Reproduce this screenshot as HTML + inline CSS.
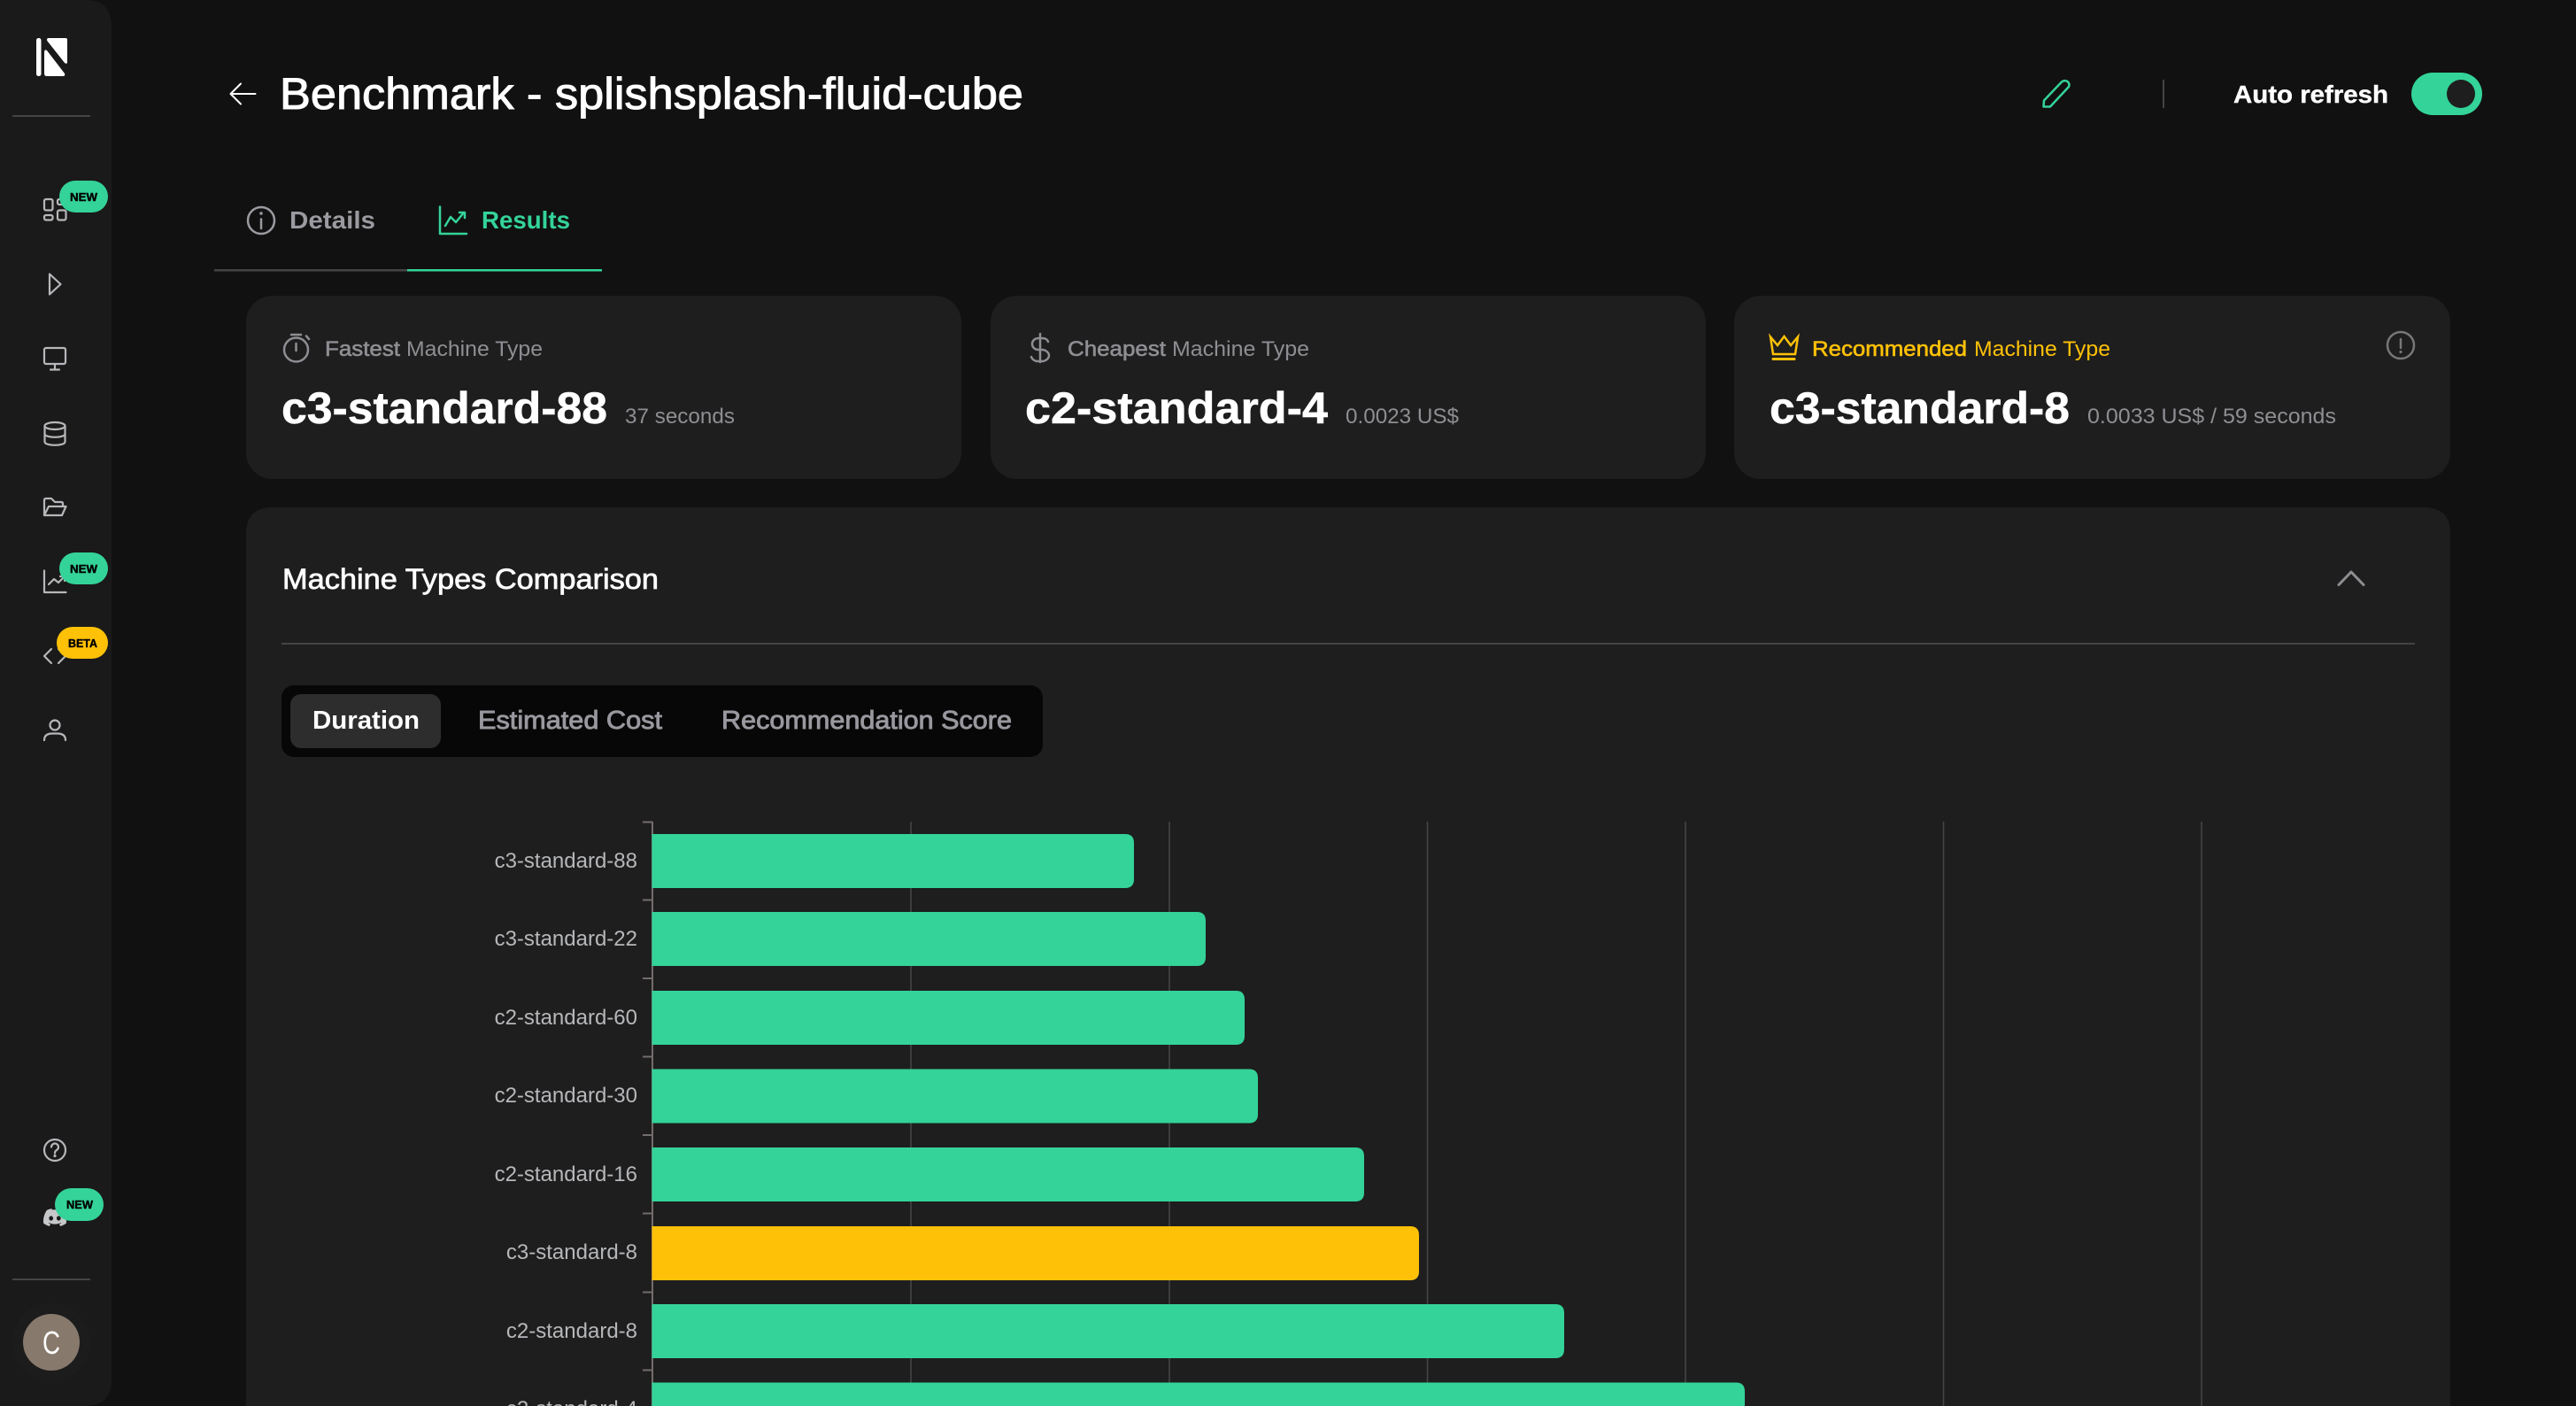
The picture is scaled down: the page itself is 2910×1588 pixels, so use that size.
<!DOCTYPE html>
<html lang="en">
<head>
<meta charset="utf-8">
<title>Benchmark - splishsplash-fluid-cube</title>
<style>
html,body{margin:0;padding:0;background:#111;width:2910px;height:1588px;overflow:hidden}
svg{display:block;overflow:hidden;font-family:"Liberation Sans",Arial,sans-serif}
.ic{fill:none;stroke:#b6b7ba;stroke-width:2.2;stroke-linecap:round;stroke-linejoin:round}
.g{fill:none;stroke:#8e8e93;stroke-width:2.5;stroke-linecap:round;stroke-linejoin:round}
.grn{fill:none;stroke:#34d399;stroke-width:2.5;stroke-linecap:round;stroke-linejoin:round}
.ylw{fill:none;stroke:#ffc107;stroke-width:2.5;stroke-linecap:round;stroke-linejoin:miter}
.bd{font-size:13px;font-weight:700;fill:#000;stroke:#000;stroke-width:.4}
.lb{font-size:24px;fill:#8e8e93}
.med{stroke-width:.6;stroke:#8e8e93}
.val{font-size:50px;font-weight:700;fill:#fff;stroke:#fff;stroke-width:.5}
.sub{font-size:24px;fill:#8e8e93}
.ax{font-size:24px;fill:#b6b7ba;text-anchor:end}
.seg{font-size:29px;fill:#98989e;stroke:#98989e;stroke-width:.9}
</style>
</head>
<body>
<svg width="2910" height="1588" viewBox="0 0 2910 1588" xmlns="http://www.w3.org/2000/svg">
<rect width="2910" height="1588" fill="#111"/>

<!-- sidebar -->
<path d="M0 0 H96 Q126 0 126 30 V1558 Q126 1588 96 1588 H0 Z" fill="#1a1a1a"/>
<rect x="41" y="43" width="5.5" height="43" rx="2.5" fill="#fff"/>
<path d="M53 45 Q53 43 55 43 H74 Q76 43 76 45 V70 Q76 73 73 71 L54 47 Q53 46 53 45 Z" fill="#fff"/>
<path d="M50 60 Q50 55 53 57 L73 83 Q74 86 71 86 H53 Q50 86 50 83 Z" fill="#fff"/>
<rect x="14" y="130" width="88" height="2" fill="#444"/>

<g class="ic">
  <rect x="50" y="225" width="9.5" height="12.5" rx="2"/>
  <rect x="50" y="243" width="9.5" height="5.5" rx="2"/>
  <rect x="65" y="225" width="9.5" height="6" rx="2"/>
  <rect x="65" y="237.5" width="9.5" height="11" rx="2"/>
  <path d="M56 309.5 L68.5 321 L56 332.5 Z"/>
  <rect x="50" y="393" width="24" height="18" rx="2"/>
  <path d="M62 411 V417 M57 417.5 H67"/>
  <ellipse cx="62" cy="481" rx="11.5" ry="4"/>
  <path d="M50.500 481 V499 C50.500 504 73.500 504 73.500 499 V481 M50.500 490 C50.500 495 73.500 495 73.500 490"/>
  <path d="M50 582 V565 Q50 563 52 563 H58 L62 567 H69 Q71 567 71 569 V571 M50 582 L55 572 H74.500 L70 582 Z"/>
  <path d="M50 644.500 V669 H74.500 M55 660 L61 654 L66 658 L73 651 M68 651 H73 V656"/>
  <path d="M58 733 L50 741 L58 749 M66 749 L74 741 L66 733"/>
  <circle cx="62" cy="819" r="5.500"/>
  <path d="M50 836 Q50 829 58 828.500 H66 Q74 829 74 836"/>
  <circle cx="62" cy="1299" r="12"/>
  <path d="M58 1295.500 A4 4 0 1 1 64 1299 C62.500 1300 62 1300.500 62 1302.500"/>
</g>
<circle cx="62" cy="1305.500" r="1.600" fill="#b6b7ba"/>
<path transform="translate(49 1362) scale(1.083)" fill="#c6c7c9" d="M20.317 4.3698a19.7913 19.7913 0 00-4.8851-1.5152.0741.0741 0 00-.0785.0371c-.211.3753-.4447.8648-.6083 1.2495-1.8447-.2762-3.68-.2762-5.4868 0-.1636-.3933-.4058-.8742-.6177-1.2495a.077.077 0 00-.0785-.037 19.7363 19.7363 0 00-4.8852 1.515.0699.0699 0 00-.0321.0277C.5334 9.0458-.319 13.5799.0992 18.0578a.0824.0824 0 00.0312.0561c2.0528 1.5076 4.0413 2.4228 5.9929 3.0294a.0777.0777 0 00.0842-.0276c.4616-.6304.8731-1.2952 1.226-1.9942a.076.076 0 00-.0416-.1057c-.6528-.2476-1.2743-.5495-1.8722-.8923a.077.077 0 01-.0076-.1277c.1258-.0943.2517-.1923.3718-.2914a.0743.0743 0 01.0776-.0105c3.9278 1.7933 8.18 1.7933 12.0614 0a.0739.0739 0 01.0785.0095c.1202.099.246.1981.3728.2924a.077.077 0 01-.0066.1276 12.2986 12.2986 0 01-1.873.8914.0766.0766 0 00-.0407.1067c.3604.698.7719 1.3628 1.225 1.9932a.076.076 0 00.0842.0286c1.961-.6067 3.9495-1.5219 6.0023-3.0294a.077.077 0 00.0313-.0552c.5004-5.177-.8382-9.6739-3.5485-13.6604a.061.061 0 00-.0312-.0286zM8.02 15.3312c-1.1825 0-2.1569-1.0857-2.1569-2.419 0-1.3332.9555-2.4189 2.157-2.4189 1.2108 0 2.1757 1.0952 2.1568 2.419 0 1.3332-.9555 2.4189-2.1569 2.4189zm7.9748 0c-1.1825 0-2.1569-1.0857-2.1569-2.419 0-1.3332.9554-2.4189 2.1569-2.4189 1.2108 0 2.1757 1.0952 2.1568 2.419 0 1.3332-.946 2.4189-2.1568 2.4189Z"/>

<rect x="67" y="204" width="55" height="36" rx="18" fill="#34d399"/>
<text class="bd" x="79" y="227" textLength="31" lengthAdjust="spacingAndGlyphs">NEW</text>
<rect x="67" y="624" width="55" height="36" rx="18" fill="#34d399"/>
<text class="bd" x="79" y="647" textLength="31" lengthAdjust="spacingAndGlyphs">NEW</text>
<rect x="64" y="708" width="58" height="36" rx="18" fill="#ffc107"/>
<text class="bd" x="77" y="731" textLength="33" lengthAdjust="spacingAndGlyphs">BETA</text>
<rect x="62" y="1342" width="55" height="37" rx="18.500" fill="#34d399"/>
<text class="bd" x="75" y="1365" textLength="30" lengthAdjust="spacingAndGlyphs">NEW</text>

<rect x="14" y="1444" width="88" height="2" fill="#444"/>
<circle cx="58" cy="1516" r="44" fill="#1c1c1c"/>
<circle cx="58" cy="1516" r="32" fill="#87796c"/>
<text x="48" y="1529" font-size="36" fill="#fff" textLength="20" lengthAdjust="spacingAndGlyphs">C</text>

<!-- header -->
<path d="M288.500 106 H261 M272 94.500 L260.500 106 L272 117.500" fill="none" stroke="#fff" stroke-width="2" stroke-linecap="round" stroke-linejoin="round"/>
<text x="316" y="123" font-size="50" fill="#fff" stroke="#fff" stroke-width="1" textLength="840" lengthAdjust="spacingAndGlyphs">Benchmark - splishsplash-fluid-cube</text>

<path class="grn" d="M2308.500 120.500 L2309 113.500 L2329 92.500 Q2332 90 2335.500 92 Q2338.500 94.500 2337 98 L2316 120.500 Z"/>
<rect x="2443" y="90" width="2" height="32" fill="#444"/>
<text x="2523" y="116" font-size="28" font-weight="700" fill="#fff" stroke="#fff" stroke-width=".4" textLength="175" lengthAdjust="spacingAndGlyphs">Auto refresh</text>
<rect x="2724" y="82" width="80" height="48" rx="24" fill="#34d399"/>
<circle cx="2780" cy="106" r="16" fill="#1e1e1e"/>

<!-- tabs -->
<circle cx="295" cy="249" r="15" fill="none" stroke="#9a9aa0" stroke-width="2.500"/>
<path d="M295 247.500 V258" stroke="#9a9aa0" stroke-width="2.500" stroke-linecap="round"/>
<circle cx="295" cy="241" r="1.800" fill="#9a9aa0"/>
<text x="327" y="258" font-size="28" font-weight="700" fill="#9a9aa0" textLength="97" lengthAdjust="spacingAndGlyphs">Details</text>
<path class="grn" d="M497 233.500 V264 H527 M503 255 L509 245 L515 251 L524 240 M519 240 H525 V246"/>
<text x="544" y="258" font-size="28" font-weight="700" fill="#34d399" textLength="100" lengthAdjust="spacingAndGlyphs">Results</text>
<rect x="242" y="304" width="218" height="2.500" fill="#444"/>
<rect x="460" y="304" width="220" height="2.500" fill="#34d399"/>

<!-- cards -->
<rect x="278" y="334" width="808" height="207" rx="30" fill="#1e1e1e"/>
<rect x="1119" y="334" width="808" height="207" rx="30" fill="#1e1e1e"/>
<rect x="1959" y="334" width="809" height="207" rx="30" fill="#1e1e1e"/>

<g class="g">
  <circle cx="334.500" cy="395" r="13.500"/>
  <path d="M329 378 H340 M334.500 388 V396 M346 379.500 L349 383"/>
  <path d="M1184 386 C1183 383 1180 382 1178 382 H1173 C1169 382 1166 385 1166 388.500 S1169 395 1173 395 H1177 C1181 395 1185 398 1185 401.500 S1181 408 1177 408 H1172 C1169 408 1166 406 1165 403 M1175 377 V409"/>
</g>
<text class="lb med" x="367" y="402" textLength="85" lengthAdjust="spacingAndGlyphs">Fastest</text>
<text class="lb" x="459" y="402" textLength="154" lengthAdjust="spacingAndGlyphs">Machine Type</text>
<text class="val" x="318" y="478" textLength="368" lengthAdjust="spacingAndGlyphs">c3-standard-88</text>
<text class="sub" x="706" y="478" textLength="124" lengthAdjust="spacingAndGlyphs">37 seconds</text>

<text class="lb med" x="1206" y="402" textLength="111" lengthAdjust="spacingAndGlyphs">Cheapest</text>
<text class="lb" x="1324" y="402" textLength="155" lengthAdjust="spacingAndGlyphs">Machine Type</text>
<text class="val" x="1158" y="478" textLength="342" lengthAdjust="spacingAndGlyphs">c2-standard-4</text>
<text class="sub" x="1520" y="478" textLength="128" lengthAdjust="spacingAndGlyphs">0.0023 US$</text>

<path class="ylw" d="M2000 380.500 L2003 400 H2028 L2031 380.500 L2023 390 L2015.500 380 L2008 390 Z"/>
<path d="M2003 405.500 H2027" stroke="#ffc107" stroke-width="3" stroke-linecap="round"/>
<text class="lb" x="2047" y="402" style="fill:#ffc107;stroke:#ffc107;stroke-width:.6" textLength="175" lengthAdjust="spacingAndGlyphs">Recommended</text>
<text class="lb" x="2230" y="402" style="fill:#ffc107" textLength="154" lengthAdjust="spacingAndGlyphs">Machine Type</text>
<text class="val" x="1999" y="478" textLength="339" lengthAdjust="spacingAndGlyphs">c3-standard-8</text>
<text class="sub" x="2358" y="478" textLength="281" lengthAdjust="spacingAndGlyphs">0.0033 US$ / 59 seconds</text>
<circle cx="2712" cy="390" r="15" fill="none" stroke="#777" stroke-width="2.500"/>
<path d="M2712 383 V393" stroke="#777" stroke-width="2.500" stroke-linecap="round"/>
<circle cx="2712" cy="397.500" r="1.600" fill="#777"/>

<!-- panel -->
<path d="M278 1588 V603 Q278 573 308 573 H2738 Q2768 573 2768 603 V1588 Z" fill="#1e1e1e"/>
<text x="319" y="665" font-size="32" fill="#fff" stroke="#fff" stroke-width=".7" textLength="425" lengthAdjust="spacingAndGlyphs">Machine Types Comparison</text>
<path class="g" style="stroke-width:3" d="M2642 660.500 L2656 646 L2670 660.500"/>
<rect x="318" y="726" width="2410" height="2" fill="#444"/>

<rect x="318" y="774" width="860" height="81" rx="14" fill="#070708"/>
<rect x="328" y="784" width="170" height="61" rx="12" fill="#2d2d2e"/>
<text x="353" y="823" font-size="29" font-weight="700" fill="#fff" textLength="121" lengthAdjust="spacingAndGlyphs">Duration</text>
<text class="seg" x="540" y="823" textLength="208" lengthAdjust="spacingAndGlyphs">Estimated Cost</text>
<text class="seg" x="815" y="823" textLength="328" lengthAdjust="spacingAndGlyphs">Recommendation Score</text>

<!-- chart grid -->
<g stroke="#454545" stroke-width="1.600">
  <path d="M1029 928 V1588 M1321 928 V1588 M1612.500 928 V1588 M1904 928 V1588 M2195.500 928 V1588 M2487 928 V1588"/>
</g>
<g stroke="#746c6c" stroke-width="2" fill="none">
  <path d="M737 928 V1588 M726 928.500 H737 M726 1016.500 H737 M726 1105 H737 M726 1193.500 H737 M726 1282 H737 M726 1370.500 H737 M726 1459.500 H737 M726 1547.500 H737"/>
</g>

<!-- bars -->
<g fill="#34d399">
  <path d="M736.500 942 H1271 Q1281 942 1281 952 V993 Q1281 1003 1271 1003 H736.500 Z"/>
  <path d="M736.500 1030 H1352 Q1362 1030 1362 1040 V1081 Q1362 1091 1352 1091 H736.500 Z"/>
  <path d="M736.500 1119 H1396 Q1406 1119 1406 1129 V1170 Q1406 1180 1396 1180 H736.500 Z"/>
  <path d="M736.500 1207.500 H1411 Q1421 1207.500 1421 1217.500 V1258.500 Q1421 1268.500 1411 1268.500 H736.500 Z"/>
  <path d="M736.500 1296 H1531 Q1541 1296 1541 1306 V1347 Q1541 1357 1531 1357 H736.500 Z"/>
  <path fill="#ffc107" d="M736.500 1385 H1593 Q1603 1385 1603 1395 V1436 Q1603 1446 1593 1446 H736.500 Z"/>
  <path d="M736.500 1473 H1757 Q1767 1473 1767 1483 V1524 Q1767 1534 1757 1534 H736.500 Z"/>
  <path d="M736.500 1561.500 H1961 Q1971 1561.500 1971 1571.500 V1588 H736.500 Z"/>
</g>

<!-- axis labels -->
<text class="ax" x="720" y="980">c3-standard-88</text>
<text class="ax" x="720" y="1068">c3-standard-22</text>
<text class="ax" x="720" y="1157">c2-standard-60</text>
<text class="ax" x="720" y="1245">c2-standard-30</text>
<text class="ax" x="720" y="1334">c2-standard-16</text>
<text class="ax" x="720" y="1422">c3-standard-8</text>
<text class="ax" x="720" y="1511">c2-standard-8</text>
<text class="ax" x="720" y="1599">c2-standard-4</text>
</svg>
</body>
</html>
